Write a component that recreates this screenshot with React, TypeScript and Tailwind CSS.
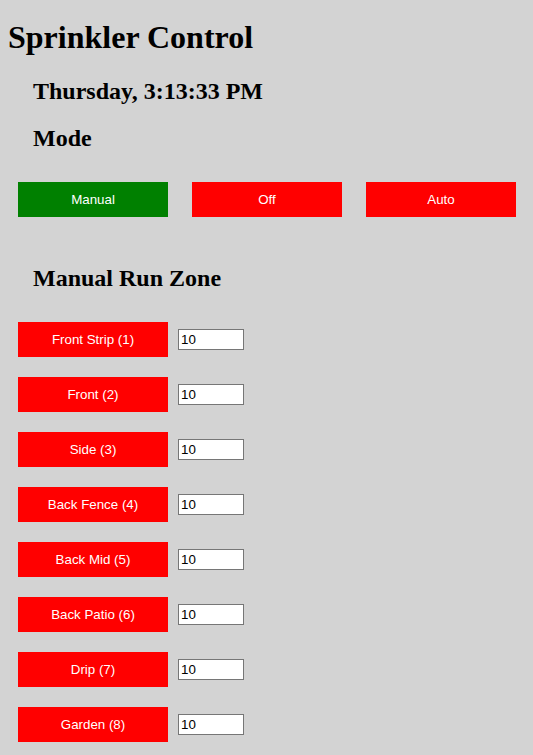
import React, { useState } from "react";

const zones = [
  "Front Strip (1)",
  "Front (2)",
  "Side (3)",
  "Back Fence (4)",
  "Back Mid (5)",
  "Back Patio (6)",
  "Drip (7)",
  "Garden (8)",
];

export default function App() {
  const [mode, setMode] = useState("Manual");
  const [mins, setMins] = useState<string[]>(zones.map(() => "10"));

  const btn =
    "w-[150px] h-[35px] text-white text-[13.33px] font-['Liberation_Sans',Arial,sans-serif] flex items-center justify-center";

  return (
    <div className="min-h-[755px] bg-[#d3d3d3] font-['Liberation_Serif','Times_New_Roman',serif] text-black pb-4">
      {/* Title */}
      <h1 className="pt-[19px] pl-[8px] text-[32px] leading-[37px] font-bold">
        Sprinkler Control
      </h1>

      <h2 className="mt-[21px] pl-[33px] text-[24px] leading-[28px] font-bold">
        Thursday, 3:13:33 PM
      </h2>

      {/* Mode */}
      <h2 className="mt-[19px] pl-[33px] text-[24px] leading-[28px] font-bold">
        Mode
      </h2>
      <div className="mt-[30px] pl-[18px] flex gap-[24px]">
        {["Manual", "Off", "Auto"].map((m) => (
          <button
            key={m}
            onClick={() => setMode(m)}
            className={`${btn} ${mode === m ? "bg-[#008000]" : "bg-[#ff0000]"}`}
          >
            {m}
          </button>
        ))}
      </div>

      {/* Zones */}
      <h2 className="mt-[47px] pl-[33px] text-[24px] leading-[28px] font-bold">
        Manual Run Zone
      </h2>
      <div className="mt-[30px] pl-[18px] flex flex-col gap-[20px]">
        {zones.map((z, i) => (
          <div key={z} className="flex items-center gap-[10px]">
            <button className={`${btn} bg-[#ff0000]`}>{z}</button>
            <input
              value={mins[i]}
              onChange={(e) =>
                setMins(mins.map((v, j) => (j === i ? e.target.value : v)))
              }
              type="text"
              className="w-[66px] h-[21px] bg-white border border-[#767676] px-[2px] text-[13.33px] font-['Liberation_Sans',Arial,sans-serif] outline-none"
            />
          </div>
        ))}
      </div>
    </div>
  );
}
